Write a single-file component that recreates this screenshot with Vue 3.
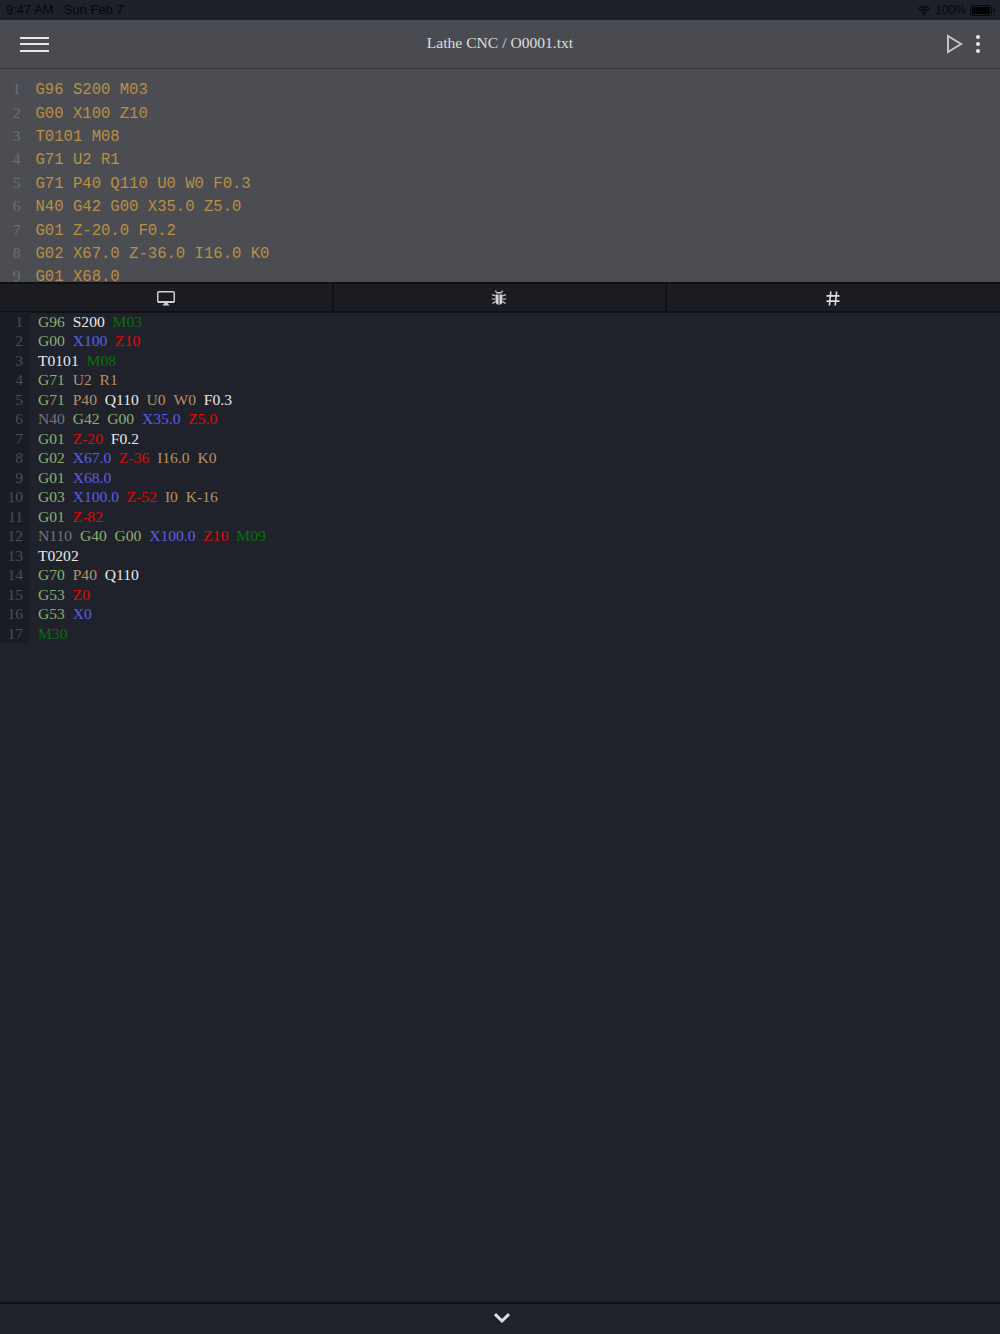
<script setup>
const topLines = [
  'G96 S200 M03',
  'G00 X100 Z10',
  'T0101 M08',
  'G71 U2 R1',
  'G71 P40 Q110 U0 W0 F0.3',
  'N40 G42 G00 X35.0 Z5.0',
  'G01 Z-20.0 F0.2',
  'G02 X67.0 Z-36.0 I16.0 K0',
  'G01 X68.0',
]
const C = { G: 'g', S: 'w', M: 'm', X: 'x', Z: 'z', T: 'w', U: 'o', R: 'o', P: 'o', Q: 'w', W: 'o', F: 'w', N: 'n', I: 'o', K: 'o' }
const source = [
  'G96 S200 M03',
  'G00 X100 Z10',
  'T0101 M08',
  'G71 U2 R1',
  'G71 P40 Q110 U0 W0 F0.3',
  'N40 G42 G00 X35.0 Z5.0',
  'G01 Z-20 F0.2',
  'G02 X67.0 Z-36 I16.0 K0',
  'G01 X68.0',
  'G03 X100.0 Z-52 I0 K-16',
  'G01 Z-82',
  'N110 G40 G00 X100.0 Z10 M09',
  'T0202',
  'G70 P40 Q110',
  'G53 Z0',
  'G53 X0',
  'M30',
]
const lines = source.map((l) => l.split(' ').map((t) => ({ t, c: C[t[0]] })))
</script>

<template>
  <div class="app">
    <div class="status">
      <div class="status-left"><span>9:47 AM</span><span>Sun Feb 7</span></div>
      <div class="status-right">
        <svg width="14" height="11" viewBox="0 0 14 11">
          <path d="M1 4a9 9 0 0 1 12 0M3 6a6 6 0 0 1 8 0M5 8a3 3 0 0 1 4 0" fill="none" stroke="#08090b" stroke-width="1.5" />
          <circle cx="7" cy="9.6" r="1.1" fill="#08090b" />
        </svg>
        <span class="pct">100%</span>
        <svg width="25" height="11" viewBox="0 0 25 11">
          <rect x="0.5" y="0.5" width="21" height="10" rx="2.5" fill="none" stroke="#08090b" />
          <rect x="2" y="2" width="18" height="7" rx="1" fill="#000" />
          <rect x="23" y="3.5" width="1.5" height="4" rx="0.7" fill="#08090b" />
        </svg>
      </div>
    </div>

    <header class="toolbar">
      <div class="menu"><i></i><i></i><i></i></div>
      <div class="title">Lathe CNC / O0001.txt</div>
      <div class="actions">
        <svg width="17" height="20" viewBox="0 0 17 20">
          <path d="M2 2 L15 10 L2 18 Z" fill="none" stroke="#c4c4c4" stroke-width="2" stroke-linejoin="miter" />
        </svg>
        <svg width="6" height="20" viewBox="0 0 6 20">
          <circle cx="3" cy="3" r="2.1" fill="#e4e4e4" />
          <circle cx="3" cy="10" r="2.1" fill="#e4e4e4" />
          <circle cx="3" cy="17" r="2.1" fill="#e4e4e4" />
        </svg>
      </div>
    </header>

    <section class="editor">
      <div v-for="(l, i) in topLines" :key="i" class="edit-line">
        <span class="edit-num">{{ i + 1 }}</span>
        <span class="edit-code">{{ l }}</span>
      </div>
    </section>

    <nav class="tabs">
      <div class="tab">
        <svg width="18" height="15" viewBox="0 0 18 15">
          <rect x="0.75" y="0.75" width="16.5" height="10.5" rx="1.2" fill="none" stroke="#d0d0d0" stroke-width="1.5" />
          <path d="M1 10h16v1.8H1z" fill="#d0d0d0" />
          <path d="M7.3 12h3.4l.5 1.5h1.3v1H5.5v-1h1.3z" fill="#d0d0d0" />
        </svg>
      </div>
      <div class="tab">
        <svg width="16" height="16" viewBox="0 0 16 16">
          <path d="M5.2 3.6C5.6 2.4 6.7 2 8 2s2.4.4 2.8 1.6z" fill="#d4d4d4" />
          <path d="M4.6 4.4h3v10.4c-1.9-.2-3-1.2-3-3zM8.4 4.4h3v7.4c0 1.8-1.1 2.8-3 3z" fill="#d4d4d4" />
          <path d="M5.6 2.6 4.4.6M10.4 2.6l1.2-2M4.6 6 1.2 4.6M4.6 9H.8M4.6 11.6l-3.2 2M11.4 6l3.4-1.4M11.4 9h3.8M11.4 11.6l3.2 2" stroke="#d4d4d4" stroke-width="1.2" fill="none" />
        </svg>
      </div>
      <div class="tab">
        <svg width="14" height="15" viewBox="0 0 14 15">
          <path d="M4.8 .5 3.4 14.5M10.6 .5 9.2 14.5M.5 4.9h13M.5 10.1h13" stroke="#dcdcdc" stroke-width="1.6" fill="none" />
        </svg>
      </div>
    </nav>

    <main class="output">
      <div class="gutter">
        <div v-for="(l, i) in lines" :key="i" class="num">{{ i + 1 }}</div>
      </div>
      <div class="code">
        <div v-for="(l, i) in lines" :key="i" class="row">
          <span v-for="(tok, j) in l" :key="j" :class="['tok', tok.c]">{{ tok.t }}</span>
        </div>
      </div>
    </main>

    <footer class="bottom">
      <svg width="18" height="12" viewBox="0 0 18 12">
        <path d="M2 2.2 9 9 16 2.2" fill="none" stroke="#dedede" stroke-width="3" />
      </svg>
    </footer>
  </div>
</template>

<style scoped>
.app {
  width: 1000px;
  height: 1334px;
  display: flex;
  flex-direction: column;
  background: #1f222a;
  overflow: hidden;
  font-family: "Liberation Serif", serif;
}
.status {
  height: 20px;
  flex: none;
  box-sizing: border-box;
  padding: 0 5px 0 6px;
  background: #1e2129;
  display: flex;
  justify-content: space-between;
  align-items: center;
  font-family: "Liberation Sans", sans-serif;
  font-size: 13px;
  color: #060708;
}
.status-left {
  display: flex;
  gap: 10px;
  padding-bottom: 2px;
}
.status-right {
  display: flex;
  align-items: center;
  gap: 4px;
}
.pct {
  font-size: 12px;
  padding-bottom: 1px;
}
.toolbar {
  height: 49px;
  flex: none;
  box-sizing: border-box;
  background: #4a4b50;
  border-bottom: 1px solid #36373b;
  padding: 0 19px 0 20px;
  display: flex;
  align-items: center;
  justify-content: space-between;
  position: relative;
}
.menu {
  display: flex;
  flex-direction: column;
  gap: 4.5px;
  width: 29px;
}
.menu i {
  display: block;
  height: 2px;
  background: #e8e8e8;
}
.title {
  position: absolute;
  left: 0;
  right: 0;
  padding-bottom: 2px;
  text-align: center;
  font-size: 15.6px;
  color: #dedede;
  pointer-events: none;
}
.actions {
  display: flex;
  align-items: center;
  gap: 12px;
}
.editor {
  height: 213px;
  flex: none;
  box-sizing: border-box;
  padding-top: 9.4px;
  background: #4c4d53;
  overflow: hidden;
}
.edit-line {
  height: 23.43px;
  display: flex;
  align-items: center;
  white-space: pre;
}
.edit-num {
  width: 20.5px;
  padding-bottom: 2px;
  text-align: right;
  font-size: 15.6px;
  color: #6d7079;
  flex: none;
}
.edit-code {
  margin-left: 15px;
  font-family: "Liberation Mono", monospace;
  font-size: 15.6px;
  color: #b98f41;
}
.tabs {
  height: 31px;
  flex: none;
  box-sizing: border-box;
  display: grid;
  grid-template-columns: 334px 333px 1fr;
  background: #1a1c21;
  border-top: 2px solid #101114;
  border-bottom: 2px solid #101114;
}
.tab {
  display: flex;
  align-items: center;
  justify-content: center;
  padding-top: 1px;
  border-right: 2px solid #101114;
}
.tab:nth-child(2) {
  padding-right: 2px;
}
.tab:last-child {
  border-right: none;
  padding-right: 1px;
}
.output {
  flex: 1;
  display: flex;
  align-items: flex-start;
  margin-top: -1.2px;
  font-size: 15.6px;
  line-height: 19.5px;
}
.gutter {
  width: 30px;
  flex: none;
  background: #191c22;
}
.num {
  box-sizing: border-box;
  padding-right: 7px;
  text-align: right;
  color: #4a4e58;
}
.code {
  margin-left: 8px;
}
.row {
  height: 19.5px;
  white-space: pre;
}
.tok {
  margin-right: 7.8px;
}
.g { color: #8db070; }
.w { color: #e8e8e8; }
.m { color: #08700c; }
.x { color: #5a5ee8; }
.z { color: #e00808; }
.o { color: #b98f63; }
.n { color: #74757a; }
.bottom {
  height: 32px;
  flex: none;
  box-sizing: border-box;
  border-top: 2px solid #0f1013;
  background: #1f222a;
  display: flex;
  justify-content: center;
  align-items: center;
  padding: 0 0 3px 4px;
}
</style>
